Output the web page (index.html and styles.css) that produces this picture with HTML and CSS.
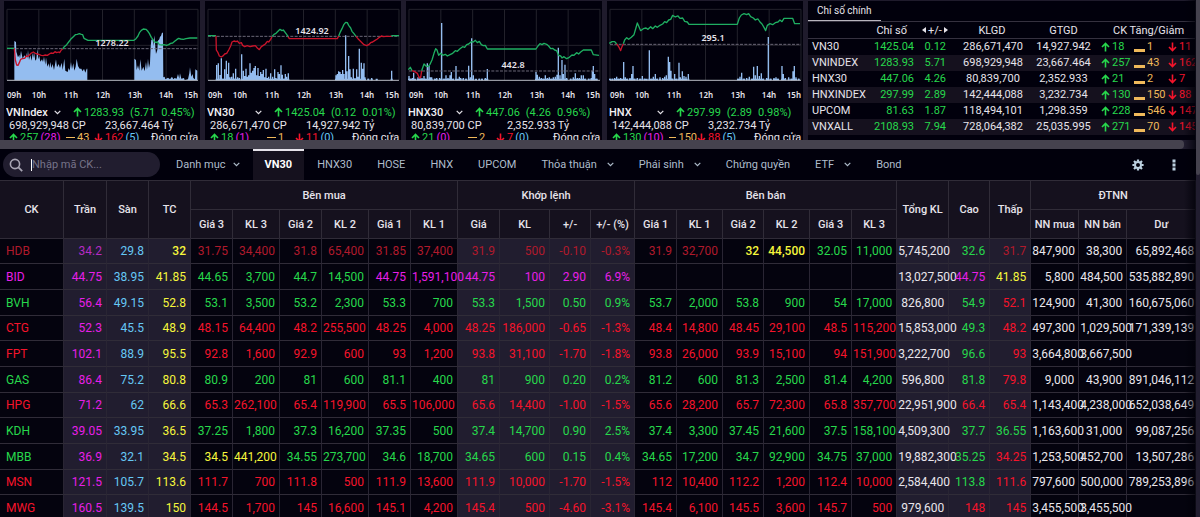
FILE: index.html
```html
<!DOCTYPE html>
<html lang="vi">
<head>
<meta charset="utf-8">
<title>Bảng giá VN30</title>
<link rel="stylesheet" href="styles.css">
</head>
<body>
<svg class="sprite" aria-hidden="true">
  <symbol id="up" viewBox="0 0 9 10"><path d="M4.5 9.5V1.5M1 5l3.500-3.500L8 5" fill="none" stroke="currentColor" stroke-width="1.600"/></symbol>
  <symbol id="down" viewBox="0 0 9 10"><path d="M4.500 .5v8M1 5l3.500 3.500L8 5" fill="none" stroke="currentColor" stroke-width="1.600"/></symbol>
  <symbol id="chev" viewBox="0 0 7 5"><path d="M.7 .8l2.800 2.800L6.300 .8" fill="none" stroke="currentColor" stroke-width="1.200"/></symbol>
</svg>
<div class="app">
  <main class="board">
    <section class="summary">
      <div class="cards" id="cards"></div>
      <div class="indices">
        <div class="indices-tabs"><a class="indices-tab" href="#chinh">Chỉ số chính</a></div>
        <table class="index-table">
          <colgroup><col class="i-name"><col class="i-val"><col class="i-chg"><col class="i-vol"><col class="i-amt"><col class="i-up"><col class="i-flat"><col class="i-down"></colgroup>
          <thead>
            <tr><th></th><th class="th-val">Chỉ số</th><th><span class="pager"><svg width="4" height="6" viewBox="0 0 4 6"><path d="M4 0v6L0 3z" fill="currentColor"/></svg>+/-<svg width="4" height="6" viewBox="0 0 4 6"><path d="M0 0v6l4-3z" fill="currentColor"/></svg></span></th><th class="th-vol">KLGD</th><th>GTGD</th><th colspan="3" class="th-ck">CK Tăng/Giảm</th></tr>
          </thead>
          <tbody id="indexRows"></tbody>
        </table>
      </div>
    </section>
    <div class="hscroll"><div class="hscroll-thumb"></div></div>
    <nav class="toolbar">
      <label class="search">
        <svg width="14" height="14" viewBox="0 0 14 14"><circle cx="6" cy="6" r="4.600" fill="none" stroke="currentColor" stroke-width="1.600"/><path d="M9.400 9.400l3.800 3.800" stroke="currentColor" stroke-width="1.800"/></svg>
        <span class="caret"></span>
        <input class="search-input" type="text" placeholder="Nhập mã CK..." aria-label="Nhập mã CK">
      </label>
      <div class="tabs">
        <button class="tab near" type="button">Danh mục<svg class="chev"><use href="#chev"/></svg></button>
        <a class="tab active" href="#vn30">VN30</a>
        <a class="tab" href="#hnx30">HNX30</a>
        <a class="tab" href="#hose">HOSE</a>
        <a class="tab" href="#hnx">HNX</a>
        <a class="tab" href="#upcom">UPCOM</a>
        <button class="tab" type="button">Thỏa thuận<svg class="chev"><use href="#chev"/></svg></button>
        <button class="tab" type="button">Phái sinh<svg class="chev"><use href="#chev"/></svg></button>
        <a class="tab" href="#cq">Chứng quyền</a>
        <button class="tab" type="button">ETF<svg class="chev"><use href="#chev"/></svg></button>
        <a class="tab" href="#bond">Bond</a>
      </div>
      <div class="tools">
        <button class="tool" type="button" aria-label="Cài đặt"><svg width="12" height="12" viewBox="0 0 12 12"><circle cx="6" cy="6" r="3" fill="none" stroke="currentColor" stroke-width="2"/><path d="M6 .4v2M6 9.600v2M.4 6h2M9.600 6h2M2 2l1.500 1.500M8.500 8.500L10 10M10 2L8.500 3.500M3.500 8.500L2 10" stroke="currentColor" stroke-width="2.200"/></svg></button>
        <button class="tool" type="button" aria-label="Thêm"><svg width="4" height="12" viewBox="0 0 4 12"><path d="M.5 .5h3v3h-3zM.5 4.500h3v3h-3zM.5 8.500h3v3h-3z" fill="currentColor"/></svg></button>
      </div>
    </nav>
    <table class="quotes">
      <colgroup id="cols"></colgroup>
      <thead>
        <tr class="h-group">
          <th rowspan="2">CK</th><th rowspan="2">Trần</th><th rowspan="2">Sàn</th><th rowspan="2">TC</th>
          <th colspan="6">Bên mua</th><th colspan="4">Khớp lệnh</th><th colspan="6">Bên bán</th>
          <th rowspan="2">Tổng KL</th><th rowspan="2">Cao</th><th rowspan="2">Thấp</th><th colspan="3">ĐTNN</th>
        </tr>
        <tr class="h-sub">
          <th>Giá 3</th><th>KL 3</th><th>Giá 2</th><th>KL 2</th><th>Giá 1</th><th>KL 1</th>
          <th>Giá</th><th>KL</th><th>+/-</th><th>+/- (%)</th>
          <th>Giá 1</th><th>KL 1</th><th>Giá 2</th><th>KL 2</th><th>Giá 3</th><th>KL 3</th>
          <th>NN mua</th><th>NN bán</th><th>Dư</th>
        </tr>
      </thead>
      <tbody id="quoteRows"></tbody>
    </table>
  </main>
  <div class="vscroll"><div class="vscroll-thumb"></div></div>
</div>
<script src="app.js"></script>
</body>
</html>
```

FILE: styles.css
```css
* { box-sizing: border-box; }
html, body { height: 100%; }
body {
  margin: 0;
  overflow: hidden;
  background: #1f1b2c;
  color: #e6e3ea;
  font: 11px/13px Roboto, "Noto Sans", sans-serif;
}
.sprite { position: absolute; width: 0; height: 0; }
.app { display: flex; height: 100%; }
.board { position: relative; flex: 1; min-width: 0; overflow: hidden; }
.board::after {
  content: "";
  position: absolute;
  inset: 0 0 0 auto;
  width: 12px;
  background: linear-gradient(90deg, rgba(0, 0, 8, 0), rgba(0, 0, 8, .75));
  pointer-events: none;
}
.vscroll { width: 4px; background: #211d2f; }
.vscroll-thumb { height: 175px; background: #45424e; border-radius: 0 0 3px 3px; }

/* index summary */
.summary { display: flex; gap: 5px; height: 140px; padding: 1px 1px 0 4px; overflow: hidden; }
.cards { flex: 799; display: grid; grid-template-columns: repeat(4, 1fr); gap: 5px; }
.card { background: #01000c; min-width: 0; }
.chart { display: block; width: 100%; height: auto; }
.chart text { font: 600 8px "Noto Sans", sans-serif; fill: #e6e3ea; }
.chart .ref-label { font-size: 9px; }
.card-line { display: flex; align-items: center; height: 12px; white-space: nowrap; }
.card-line.first { height: 14px; gap: 6px; }
.card-line .icon { width: 9px; height: 10px; flex: none; }
.pick { display: flex; align-items: center; width: 58px; margin-right: 5px; }
.pick-select {
  appearance: none;
  width: 48px;
  flex: none;
  margin: 0 0 0 2px;
  padding: 0;
  border: 0;
  background: transparent;
  color: #f2f0f4;
  font: 500 11px/13px Roboto, sans-serif;
}
.chev { width: 7px; height: 5px; flex: none; }
.price { display: flex; gap: 2px; align-items: center; }
.vol { width: 101px; padding-left: 5px; }
.counts { display: grid; grid-template-columns: 57px 28px 57px auto; padding-left: 5px; }
.count { display: flex; align-items: center; gap: 2px; }
.dash { width: 9px; height: 1px; background: #f0b95a; }

.indices { flex: 387; background: #01000c; min-width: 0; overflow: hidden; }
.indices-tabs { display: flex; height: 20px; }
.indices-tab {
  padding: 3px 9px 0;
  border-bottom: 1px solid #b8b5be;
  color: #e6e3ea;
  text-decoration: none;
  font-size: 10px;
}
.index-table { width: 100%; table-layout: fixed; border-collapse: collapse; white-space: nowrap; }
.index-table th {
  height: 17px;
  padding: 0;
  font-weight: 400;
  border-top: 1px solid #35313f;
  border-bottom: 1px solid #35313f;
}
.index-table .th-val { text-align: right; padding-right: 7px; }
.index-table .th-vol { padding-left: 12px; }
.index-table .th-ck { text-align: left; padding-left: 12px; }
.index-table td { height: 16px; padding: 0; line-height: 15px; text-align: center; }
.index-table td:first-child { padding-left: 4px; text-align: left; }
.index-table td:nth-child(2), .index-table td:nth-child(3) { text-align: right; }
.index-table td:nth-child(4) { padding-left: 14px; }
.index-table td:nth-child(n+6) { text-align: left; }
.index-table tbody tr:nth-child(even) { background: #15111e; }
.index-table .icon { width: 9px; height: 10px; flex: none; }
.index-table .dash { width: 11px; height: 3px; align-self: flex-end; margin-bottom: 2px; flex: none; }
.pager { display: inline-flex; align-items: center; gap: 2px; padding-left: 8px; }
.i-name { width: 60px; }
.i-val { width: 46px; }
.i-chg { width: 32px; }
.i-vol { width: 80px; }
.i-amt { width: 75px; }
.i-up { width: 33px; }
.i-flat { width: 34px; }

.hscroll { height: 9px; background: #211d2f; }
.hscroll-thumb { width: 99%; height: 9px; background: #45424e; border-radius: 0 4px 4px 0; }

/* toolbar */
.toolbar { display: flex; align-items: stretch; height: 31px; background: #01000c; }
.search {
  display: flex;
  align-items: center;
  width: 157px;
  height: 25px;
  margin: 3px 4px 3px 3px;
  padding-left: 6px;
  border-radius: 13px;
  background: #211d2f;
  color: #a9a6b4;
}
.caret { width: 1px; height: 12px; margin-left: 8px; background: #fff; }
.search-input {
  flex: 1;
  min-width: 0;
  border: 0;
  padding: 0;
  outline: 0;
  background: transparent;
  color: #fff;
  font: 11px/14px Roboto, sans-serif;
}
.search-input::placeholder { color: #77748a; }
.tabs { display: flex; flex: 1; gap: 1px; }
.tab {
  display: flex;
  align-items: center;
  gap: 10px;
  padding: 0 12px 2px;
  border: 0;
  border-top: 2px solid transparent;
  background: transparent;
  color: #aebccb;
  font: 11px/14px Roboto, sans-serif;
  text-decoration: none;
  white-space: nowrap;
}
.tab.near { gap: 7px; }
.tab.active { background: #15111e; border-top-color: #e6e3ea; color: #fff; font-weight: 700; }
.tools { display: flex; align-items: center; gap: 28px; padding-right: 20px; }
.tool { display: flex; padding: 0; border: 0; background: transparent; color: #bcd0e0; }

/* price board */
.quotes { width: 100%; table-layout: fixed; border-collapse: separate; border-spacing: 0; white-space: nowrap; }
.quotes th {
  height: 29px;
  padding: 0;
  background: #15111e;
  border-top: 1px solid #302c38;
  border-right: 1px solid #302c38;
  font-weight: 500;
  font-size: 11px;
}
.quotes td {
  height: 26px;
  padding: 0 4px 0 1px;
  background: #04030e;
  border-top: 1px solid #302c38;
  border-right: 1px solid #292533;
  font: 12px/14px Roboto, sans-serif;
  text-align: right;
}
.quotes tr:nth-child(3n+1) td { height: 25px; }
.quotes td:first-child { padding-left: 6px; text-align: left; }
.quotes td:last-child { padding-right: 1px; }
.quotes td.shade { background: #211d2f; }
.r { color: #f5142b; }
.g { color: #27d84c; }
.v { color: #e81fe8; }
.c { color: #66c8f5; }
.y { color: #f7f73c; }
.w { color: #e9e6ec; }
.o { color: #f0b95a; }
.dim .r { color: #b01a2c; }
.dim .v { color: #b52bc4; }
.quotes td.b { font-weight: 500; }
```

FILE: app.js
```js
const icon = (name) => `<svg class="icon"><use href="#${name}"/></svg>`;

// Chart geometry is in thirds of a pixel; the plot spans y 28 to 241.
const charts = [
  {
    names: 'VNIndex', price: '1283.93', chg: '5.71', pct: '0.45%', vol: '698,929,948', amt: '23,667.464',
    up: '257', ceil: '28', flat: '43', down: '162', floor: '5', left: 12, ref: 146, label: '1278.22', lx: 335, ly: 138,
    lines: [
      ['g', '21,145 43,145'],
      ['r', '43,145 46,180 50,195 54,196 58,188 62,178 67,176 74,175 79,168 84,169 88,165 94,159 100,156 106,160 112,162 118,164 124,166 130,167 136,165 142,166 148,162 153,159 160,160 165,155 170,158 175,156 179,158 184,150 188,147'],
      ['g', '188,147 193,140 200,134 206,126 212,118 220,110 226,104 232,103 238,101 244,103 248,104 252,115 258,118 264,121 402,121 408,116 414,108 419,97 424,91 430,87 438,88 443,93 448,100 454,112 459,119 463,125 468,128 472,125 478,134 486,135 492,134 500,136 506,134 512,130 518,129 524,124 530,119 536,115 542,117 550,118 558,116 570,114 592,114']],
    area: '43,241 43,123 48,126 49,155 54,172 58,164 60,175 63,152 68,176 73,166 78,174 80,158 82,176 84,150 87,180 91,165 95,182 98,158 100,174 102,156 106,182 109,178 112,146 115,178 118,168 121,185 126,178 129,186 132,170 136,194 138,172 142,200 146,190 148,204 151,186 154,204 158,192 162,210 168,178 171,202 176,192 180,204 185,188 188,210 193,176 196,212 203,216 206,204 209,212 213,186 216,208 220,190 223,212 227,200 230,176 234,198 239,206 244,206 248,214 252,206 256,218 260,206 262,206 262,241 403,241 403,176 408,180 410,210 414,196 418,212 421,178 425,212 430,200 434,214 438,186 441,210 444,176 447,204 450,190 452,140 454,120 458,116 460,138 463,106 466,140 468,162 472,150 474,122 478,118 480,110 483,108 486,98 489,98 490,232 494,230 496,238 504,233 510,238 516,230 520,238 524,234 530,236 534,222 538,236 540,220 544,236 552,234 554,241 564,238 568,220 570,202 574,230 578,222 580,234 585,238 586,208 592,212 592,241', bars: ''
  },
  {
    names: 'VN30', price: '1425.04', chg: '0.12', pct: '0.01%', vol: '286,671,470', amt: '14,927.942',
    up: '18', ceil: '1', flat: '1', down: '11', floor: '0', left: 15, ref: 109, label: '1424.92', lx: 337, ly: 101,
    lines: [
      ['g', '24,107 48,107'],
      ['r', '48,107 49,150 54,158 58,168 64,171 70,167 74,162 80,160 86,150 92,138 96,126 102,123 108,125 112,123 118,130 124,128 128,136 134,140 142,137 150,140 158,138 166,137 172,144 178,149 184,140 190,136 196,132 202,124 206,126 212,118 216,110'],
      ['g', '216,110 222,103 228,100 234,94 240,88 246,92 250,90 256,98 262,106 264,110'],
      ['r', '264,110 268,116 412,116 416,108'],
      ['g', '416,108 420,98 426,86 432,73 437,67 442,68 446,76 452,84 456,94 462,101 468,109'],
      ['r', '468,109 474,116 480,122 486,128 492,134 500,137 506,134 512,128 518,126 524,122 532,117 538,112 544,108 550,110 558,109 574,109'],
      ['g', '574,107 597,107']],
    bars: '50,195 55,190 60,225 64,175 69,236 74,208 79,182 82,222 86,188 90,232 95,230 100,220 104,236 107,206 113,232 118,234 125,163 130,212 134,228 138,206 142,230 146,226 150,190 154,218 158,212 162,204 166,198 170,226 174,204 178,228 182,216 186,222 190,210 194,232 198,206 202,234 206,230 212,220 218,230 224,208 228,234 234,216 238,222 243,196 247,224 252,236 256,222 260,230 265,220 408,226 412,222 416,214 420,216 424,222 428,210 432,222 437,106 441,214 446,168 450,208 454,232 460,206 465,234 470,208 474,230 478,146 484,188 488,206 492,190 495,232 505,236 515,234 530,237 575,212'
  },
  {
    names: 'HNX30', price: '447.06', chg: '4.26', pct: '0.96%', vol: '80,839,700', amt: '2,352.933',
    up: '21', ceil: '0', flat: '2', down: '7', floor: '0', left: 18, ref: 213, label: '442.8', lx: 338, ly: 204,
    lines: [
      ['g', '25,209 31,202 36,212'],
      ['r', '36,212 44,215 52,220 58,234 62,232 65,212'],
      ['g', '65,212 72,192 78,198 84,200 90,193 96,180 102,160 107,146 111,150 116,166 122,160 128,166 136,163 142,168 150,164 158,160 166,152 172,154 180,146 188,140 194,142 200,134 206,132 214,125 220,126 226,121 232,128 238,124 244,134 250,137 256,136 262,147 408,147 414,138 420,131 426,134 432,130 440,133 446,138 452,146 458,145 464,150 470,152 476,166 482,168 486,174 492,170 500,176 508,172 516,165 522,166 530,158 536,162 542,156 550,150 574,150 580,164 597,166']],
    bars: '27,228 31,236 37,234 41,218 46,238 54,232 60,230 66,234 72,228 76,236 82,190 87,198 91,232 95,232 104,236 110,234 119,234 125,69 132,236 138,226 144,234 150,226 154,216 160,236 168,198 172,238 178,230 182,234 190,234 198,236 206,197 211,232 215,115 220,226 228,238 238,236 246,236 256,234 262,207 408,216 412,224 418,230 424,234 430,236 436,226 442,234 448,232 454,236 460,232 466,230 471,224 475,143 480,226 486,180 490,222 495,194 500,234 512,236 520,232 526,220 532,234 538,234 544,226 550,226 556,236 566,236 574,234 577,212 580,198 584,222 590,236'
  },
  {
    names: 'HNX', price: '297.99', chg: '2.89', pct: '0.98%', vol: '142,444,088', amt: '3,232.734',
    up: '130', ceil: '10', flat: '150', down: '88', floor: '5', left: 21, ref: 133, label: '295.1', lx: 340, ly: 124,
    lines: [
      ['g', '28,130 36,125 44,125 50,132'],
      ['r', '50,132 56,140 62,152 66,140 70,131'],
      ['g', '70,131 74,120 80,113 86,118 94,112 102,104 106,90 112,69 116,78 122,92 130,86 138,84 144,88 152,80 158,86 166,78 172,82 180,76 188,72 194,65 200,68 206,60 212,58 218,46 226,51 234,48 240,55 248,54 254,64 262,66 267,73 412,73 418,54 424,45 432,41 440,44 446,41 452,50 460,54 466,60 474,57 480,66 486,72 492,82 497,92 502,76 510,71 518,74 526,68 534,66 540,60 546,65 552,55 578,55 584,71 600,71']],
    bars: '30,236 37,236 44,234 50,230 56,236 62,234 66,238 71,186 76,232 82,236 90,234 95,222 99,198 104,236 112,234 120,236 127,228 134,236 140,238 148,151 154,236 160,230 166,222 172,236 180,232 188,234 194,230 199,226 205,170 209,186 213,212 217,236 224,222 230,236 237,188 241,232 247,214 252,228 258,230 265,222 414,236 420,230 425,218 432,236 440,234 448,230 456,236 461,200 466,226 472,198 478,228 484,220 490,236 500,234 505,111 512,236 522,234 528,232 534,236 546,198 550,222 556,234 566,232 574,236 579,214 583,198 588,232 596,236'
  }
];
const lineColor = { g: '#1fae62', r: '#c9142b' };

document.getElementById('cards').innerHTML = charts.map((c) => {
  const L = c.left + 9;
  const grid = [0, 1, 2, 3, 4, 5, 6].map((i) => `M${L + i * 95.5} 28V241`).join('') + `M${L} 28h573M${L} 136h573`;
  const bars = c.bars ? c.bars.split(' ').map((p) => { const [x, y] = p.split(','); return `M${x} 241V${y}`; }).join('') : '';
  const base = c.bars ? c.bars.split(' ').map((p) => p.split(',')[0]) : [];
  const floorBars = base.map((x) => `M${+x - 3} 241v-5h6v5z`).join('');
  const hours = ['09h', '10h', '11h', '12h', '13h', '14h', '15h'].map((h, i) => {
    const x = [3, 35, 67, 99, 131, 162, 194][i];
    const a = i === 0 ? 'start' : i === 6 ? 'end' : 'middle';
    return `<text x="${x}" y="97" text-anchor="${a}">${h}</text>`;
  }).join('');
  return `<article class="card">
    <svg class="chart" viewBox="0 0 196 104">
      <g transform="scale(.3333) translate(${-c.left} -3)" fill="none">
        <path d="${grid}" stroke="#23222c" stroke-width="3"/>
        <polygon points="${c.area || ''}" fill="#94bdf0"/>
        <path d="${floorBars}" fill="#94bdf0"/><path d="${bars}" stroke="#94bdf0" stroke-width="4"/>
        <path d="M${L} 241h573" stroke="#b9bcc4" stroke-width="3"/>
        <path d="M${L} ${c.ref}h573" stroke="#6b6878" stroke-width="3" stroke-dasharray="9 4"/>
        ${c.lines.map(([k, p]) => `<polyline points="${p}" stroke="${lineColor[k]}" stroke-width="4" stroke-linejoin="round"/>`).join('')}
      </g>
      <text class="ref-label" x="${Math.round((c.lx - c.left) / 3)}" y="${Math.round((c.ly - 3) / 3)}" text-anchor="middle">${c.label}</text>
      ${hours}
    </svg>
    <div class="card-line first"><label class="pick"><select class="pick-select" aria-label="Chỉ số"><option>${c.names}</option></select><svg class="chev"><use href="#chev"/></svg></label>
      <span class="price g">${icon('up')}${c.price}</span><span class="g">(${c.chg}</span><span class="g">${c.pct})</span></div>
    <div class="card-line"><span class="vol">${c.vol} CP</span><span>${c.amt} Tỷ</span></div>
    <div class="card-line counts"><span class="count g">${icon('up')}${c.up} <span class="v">(${c.ceil})</span></span>
      <span class="count o"><i class="dash"></i>${c.flat}</span>
      <span class="count r">${icon('down')}${c.down} <span class="c">(${c.floor})</span></span><span>Đóng cửa</span></div>
  </article>`;
}).join('');

const indices = [
  ['VN30', '1425.04', '0.12', '286,671,470', '14,927.942', '18', '1', '11'],
  ['VNINDEX', '1283.93', '5.71', '698,929,948', '23,667.464', '257', '43', '162'],
  ['HNX30', '447.06', '4.26', '80,839,700', '2,352.933', '21', '2', '7'],
  ['HNXINDEX', '297.99', '2.89', '142,444,088', '3,232.734', '130', '150', '88'],
  ['UPCOM', '81.63', '1.87', '118,494,101', '1,298.359', '228', '546', '147'],
  ['VNXALL', '2108.93', '7.94', '728,064,382', '25,035.995', '271', '70', '145']
];
document.getElementById('indexRows').innerHTML = indices.map((r) =>
  `<tr><td>${r[0]}</td><td class="g">${r[1]}</td><td class="g">${r[2]}</td><td>${r[3]}</td><td>${r[4]}</td>
  <td class="g"><span class="count">${icon('up')}${r[5]}</span></td>
  <td class="o"><span class="count"><i class="dash"></i>${r[6]}</span></td>
  <td class="r"><span class="count">${icon('down')}${r[7]}</span></td></tr>`).join('');

// A cell may start with its colour letter; otherwise it takes the row's colour.
const widths = [64, 43, 42, 42, 42, 47, 42, 47, 42, 47, 42, 50, 41, 44, 42, 46, 41, 46, 42, 45, 52, 41, 41, 48, 48, 69];
const rows = [
  'r HDB 34.2 29.8 Y32 31.75 34,400 31.8 65,400 31.85 37,400 31.9 500 -0.10 -0.3% 31.9 32,700 Y32 Y44,500 g32.05 g11,000 5,745,200 g32.6 31.7 847,900 38,300 65,892,468',
  'v BID 44.75 38.95 41.85 g44.65 g3,700 g44.7 g14,500 44.75 1,591,100 44.75 100 2.90 6.9% _ _ _ _ _ _ 13,027,500 44.75 y41.85 5,800 484,500 535,882,890',
  'g BVH 56.4 49.15 52.8 53.1 3,500 53.2 2,300 53.3 700 53.3 1,500 0.50 0.9% 53.7 2,000 53.8 900 54 17,000 826,800 54.9 r52.1 124,900 41,300 160,675,060',
  'r CTG 52.3 45.5 48.9 48.15 64,400 48.2 255,500 48.25 4,000 48.25 186,000 -0.65 -1.3% 48.4 14,800 48.45 29,100 48.5 115,200 15,853,000 g49.3 48.2 497,300 1,029,500 171,339,139',
  'r FPT 102.1 88.9 95.5 92.8 1,600 92.9 600 93 1,200 93.8 31,100 -1.70 -1.8% 93.8 26,000 93.9 15,100 94 151,900 3,222,700 g96.6 93 3,664,800 3,667,500 _',
  'g GAS 86.4 75.2 80.8 80.9 200 81 600 81.1 400 81 900 0.20 0.2% 81.2 600 81.3 2,500 81.4 4,200 596,800 81.8 r79.8 9,000 43,900 891,046,112',
  'r HPG 71.2 62 66.6 65.3 262,100 65.4 119,900 65.5 106,000 65.6 14,400 -1.00 -1.5% 65.6 28,200 65.7 72,300 65.8 357,700 22,951,900 66.4 65.4 1,143,400 4,238,000 652,038,649',
  'g KDH 39.05 33.95 36.5 37.25 1,800 37.3 16,200 37.35 500 37.4 14,700 0.90 2.5% 37.4 3,300 37.45 21,600 37.5 158,100 4,509,300 37.7 36.55 1,163,600 31,000 99,087,256',
  'g MBB 36.9 32.1 34.5 y34.5 y441,200 34.55 273,700 34.6 18,700 34.65 600 0.15 0.4% 34.65 17,200 34.7 92,900 34.75 37,000 19,882,300 35.25 r34.25 1,253,500 452,700 13,507,286',
  'r MSN 121.5 105.7 113.6 111.7 700 111.8 500 111.9 13,600 111.9 10,000 -1.70 -1.5% 112 10,400 112.2 1,200 112.4 10,000 2,584,400 g113.8 111.6 797,600 500,000 789,253,896',
  'r MWG 160.5 139.5 150 144.5 1,700 145 16,600 145.1 4,200 145.4 500 -4.60 -3.1% 145.4 6,100 145.5 3,600 145.7 500 979,600 148 145 3,455,500 3,455,500 _'
];
const columnColor = { 1: 'v', 2: 'c', 3: 'y', 20: 'w', 23: 'w', 24: 'w', 25: 'w' };
const shaded = (i) => (i > 0 && i < 4) || (i > 9 && i < 14) || (i > 19 && i < 23);

document.getElementById('cols').innerHTML = widths.map((w) => `<col style="width:${w}px">`).join('');
document.getElementById('quoteRows').innerHTML = rows.map((line, n) => {
  const [base, ...cells] = line.split(' ');
  const tds = cells.map((t, i) => {
    let color = columnColor[i] || base;
    let text = t === '_' ? '' : t;
    if (i > 0 && /^[a-zA-Z]/.test(t)) { color = t[0]; text = t.slice(1); }
    const cls = (color === 'Y' ? 'y b' : color) + (shaded(i) ? ' shade' : '');
    return `<td class="${cls}">${text}</td>`;
  }).join('');
  return `<tr${n === 0 ? ' class="dim"' : ''}>${tds}</tr>`;
}).join('');
```
